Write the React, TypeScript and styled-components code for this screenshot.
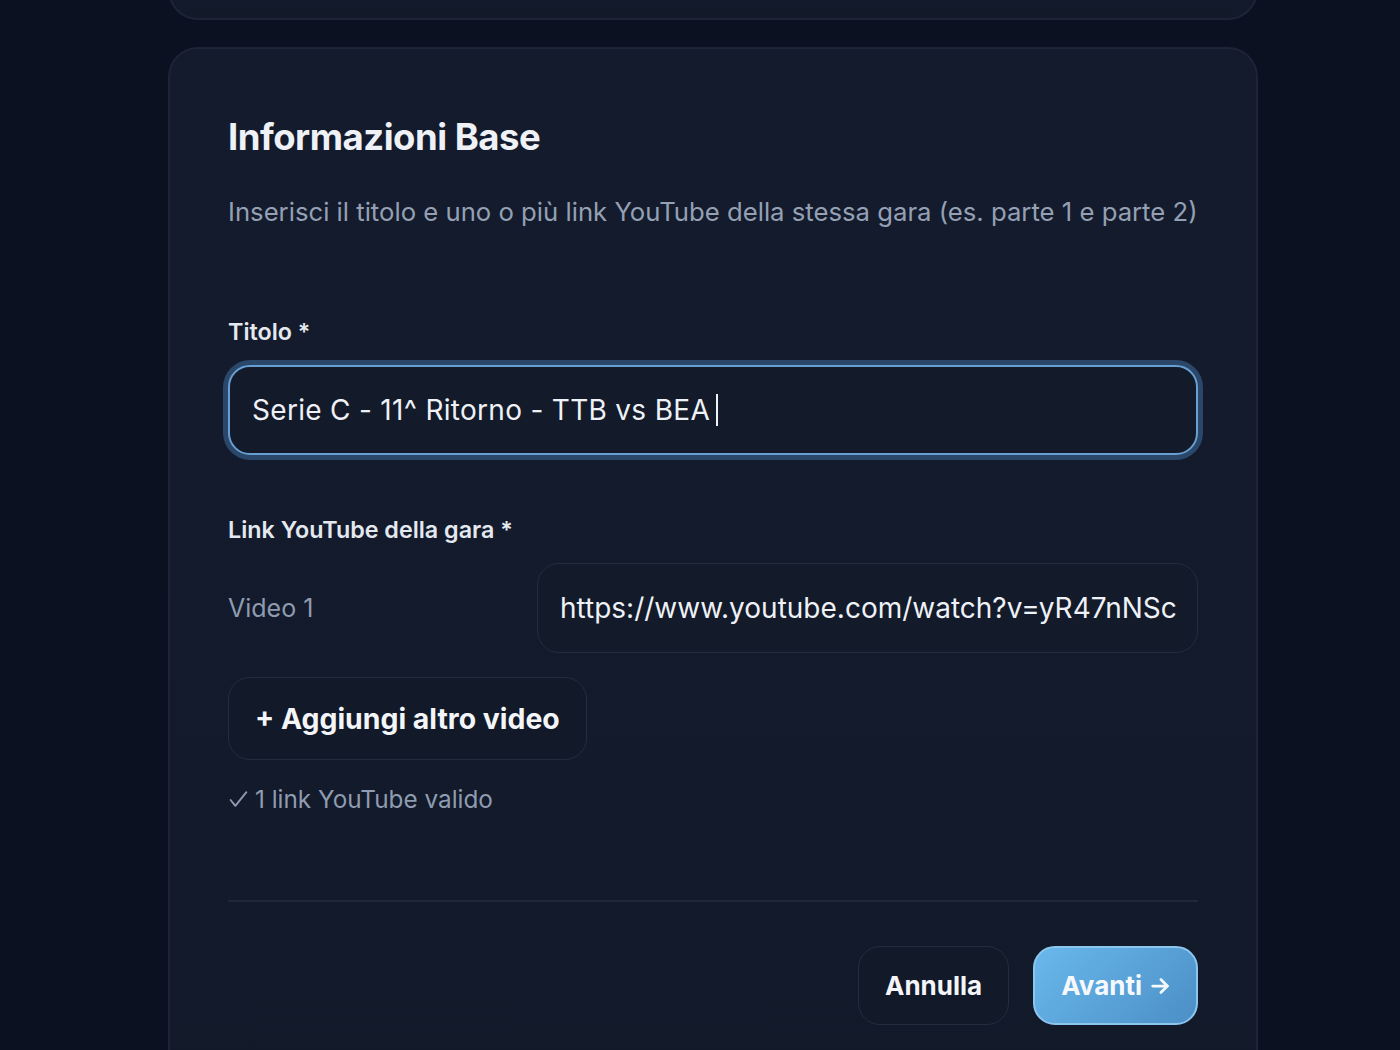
import styled, { createGlobalStyle } from "styled-components";

const GlobalStyle = createGlobalStyle`
  html, body {
    margin: 0;
    padding: 0;
    background: #0b1120;
    font-family: Inter, "Noto Sans", "Liberation Sans", sans-serif;
    -webkit-font-smoothing: antialiased;
  }
  * { box-sizing: border-box; }
`;

const Page = styled.div`
  width: 1400px;
  height: 1050px;
  overflow: hidden;
  padding-left: 168px;
  display: flex;
  flex-direction: column;
  gap: 27px;
`;

const Card = styled.section<{ $stub?: boolean }>`
  width: 1090px;
  background: linear-gradient(180deg, #141b2d 0%, #121a2a 100%);
  border: 2px solid #1d2438;
  border-radius: 30px;
  flex-shrink: 0;
  ${({ $stub }) => $stub && `
    height: 120px;
    margin-top: -100px;
  `}
`;

const Body = styled.div`
  padding: 66px 58px 90px 58px;
`;

const Title = styled.h2`
  margin: 0;
  font-size: 36.5px;
  line-height: 44px;
  font-weight: 700;
  letter-spacing: -0.5px;
  color: #eef1f6;
`;

const Subtitle = styled.p`
  margin: 36px 0 0;
  font-size: 25.7px;
  line-height: 34px;
  color: #94a0b4;
`;

const Field = styled.div<{ $top: number }>`
  margin-top: ${({ $top }) => $top}px;
  display: flex;
  flex-direction: column;
`;

const Label = styled.label`
  font-size: 23.3px;
  line-height: 30px;
  font-weight: 600;
  color: #e4e8ef;
  margin-bottom: 18px;
`;

const TextInput = styled.div<{ $focused?: boolean }>`
  height: 90px;
  display: flex;
  align-items: center;
  padding: 0 22px;
  border-radius: 22px;
  font-size: 28px;
  color: #eef1f6;
  background: #131a2a;
  white-space: nowrap;
  overflow: hidden;
  letter-spacing: ${({ $focused }) => ($focused ? "0.3px" : "0")};
  border: ${({ $focused }) => ($focused ? "2px solid #679fd2" : "1.5px solid #242c3f")};
  box-shadow: ${({ $focused }) => ($focused ? "0 0 0 5px rgba(62, 108, 156, 0.55)" : "none")};
`;

const Caret = styled.span`
  display: inline-block;
  width: 2px;
  height: 32px;
  margin-left: 6px;
  background: #eef1f6;
`;

const VideoRow = styled.div`
  display: grid;
  grid-template-columns: 309px 1fr;
  align-items: center;
`;

const VideoName = styled.span`
  font-size: 25px;
  color: #8f9bb0;
`;

const GhostButton = styled.button<{ $size?: "md" | "lg" }>`
  font-family: inherit;
  font-weight: 700;
  font-size: ${({ $size }) => ($size === "lg" ? 28.4 : 26)}px;
  color: #f3f5f9;
  background: #121928;
  border: 1.5px solid #242c3f;
  border-radius: 22px;
  height: ${({ $size }) => ($size === "lg" ? 83 : 79)}px;
  padding: 0 26px;
  cursor: pointer;
`;

const AddRow = styled.div`
  margin-top: 24px;
`;

const Hint = styled.p`
  margin: 24px 0 0;
  font-size: 24.3px;
  color: #8f9bb0;
  display: flex;
  align-items: center;
  gap: 6px;
`;

const CheckIcon = () => (
  <svg width="21" height="21" viewBox="0 0 20 20" fill="none" stroke="currentColor" strokeWidth="1.8" strokeLinecap="round" strokeLinejoin="round">
    <path d="M2.5 10.5l4.5 5.5L17.5 3" />
  </svg>
);

const Divider = styled.hr`
  margin: 86px 0 0;
  border: none;
  border-top: 2px solid #1f2738;
`;

const Actions = styled.div`
  margin-top: 44px;
  display: flex;
  justify-content: flex-end;
  gap: 24px;
`;

const PrimaryButton = styled.button`
  font-family: inherit;
  font-weight: 700;
  font-size: 26px;
  color: #f6f9fc;
  height: 79px;
  padding: 0 25px 0 26px;
  border-radius: 22px;
  border: 2px solid #8cc6ef;
  background: linear-gradient(135deg, #69b8ec 0%, #4b8fc6 100%);
  display: flex;
  align-items: center;
  gap: 7px;
  cursor: pointer;
`;

const ArrowIcon = () => (
  <svg width="22" height="22" viewBox="0 0 24 24" fill="none" stroke="currentColor" strokeWidth="3" strokeLinecap="round" strokeLinejoin="round">
    <path d="M4 12h16" />
    <path d="M13 5l7 7-7 7" />
  </svg>
);

export default function App() {
  return (
    <>
      <GlobalStyle />
      <Page>
        <Card $stub />
        <Card>
          <Body>
            <Title>Informazioni Base</Title>
            <Subtitle>
              Inserisci il titolo e uno o più link YouTube della stessa gara (es. parte 1 e parte 2)
            </Subtitle>

            <Field $top={88}>
              <Label>Titolo *</Label>
              <TextInput $focused>
                Serie C - 11^ Ritorno - TTB vs BEA
                <Caret />
              </TextInput>
            </Field>

            <Field $top={60}>
              <Label>Link YouTube della gara *</Label>
              <VideoRow>
                <VideoName>Video 1</VideoName>
                <TextInput>https://www.youtube.com/watch?v=yR47nNSc</TextInput>
              </VideoRow>
              <AddRow>
                <GhostButton $size="lg">+ Aggiungi altro video</GhostButton>
              </AddRow>
              <Hint>
                <CheckIcon />1 link YouTube valido
              </Hint>
            </Field>

            <Divider />
            <Actions>
              <GhostButton>Annulla</GhostButton>
              <PrimaryButton>
                Avanti <ArrowIcon />
              </PrimaryButton>
            </Actions>
          </Body>
        </Card>
      </Page>
    </>
  );
}
